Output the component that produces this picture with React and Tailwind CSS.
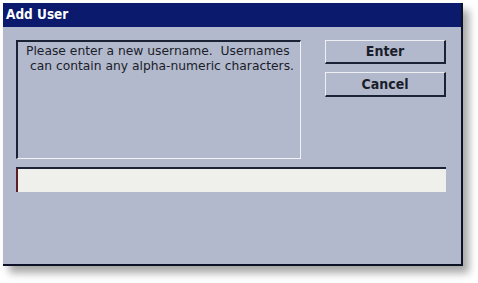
export default function App() {
  return (
    <div className="w-[478px] h-[283px] bg-white pt-[3px] pl-[3px] font-['DejaVu_Sans',sans-serif]">
      <div className="w-[460px] h-[263px] flex flex-col bg-[#b3b9cc] border-r-2 border-b-2 border-[#0d1226] shadow-[6px_7px_8px_rgba(0,0,0,0.35)]">
        <div className="h-[24px] bg-[#0b1a6c] flex items-center px-[3px]">
          <span className="text-white font-bold text-[13.5px] leading-none font-['DejaVu_Sans_Condensed','DejaVu_Sans',sans-serif]">Add User</span>
        </div>
        <div className="flex-1 px-[13px] pt-[13px]">
          <div className="flex gap-[24px]">
            <div className="w-[285px] h-[119px] border-t-2 border-l-2 border-[#1c2235] border-r border-b border-r-[#f2f3f6] border-b-[#f2f3f6] px-[8px] pt-[2px]">
              <p className="text-[12.3px] leading-[15px] text-[#1a1d2a] whitespace-nowrap">
                Please enter a new username.&nbsp; Usernames
                <br />
                &nbsp;can contain any alpha-numeric characters.
              </p>
            </div>
            <div className="flex flex-col gap-[8px]">
              <button className="w-[121px] h-[24px] border border-t-[#eef0f4] border-l-[#eef0f4] border-r-[#1c2235] border-b-[#1c2235] border-r-2 border-b-2 text-[14px] font-bold text-[#1a1d2a] font-['DejaVu_Sans_Condensed','DejaVu_Sans',sans-serif]">
                Enter
              </button>
              <button className="w-[121px] h-[25px] border border-t-[#eef0f4] border-l-[#eef0f4] border-r-[#1c2235] border-b-[#1c2235] border-r-2 border-b-2 text-[14px] font-bold text-[#1a1d2a] font-['DejaVu_Sans_Condensed','DejaVu_Sans',sans-serif]">
                Cancel
              </button>
            </div>
          </div>
          <div className="mt-[8px] w-[430px] h-[25px] bg-[#efefeb] border-t-2 border-l-2 border-[#1c2235] border-l-[#5a1f22]" />
        </div>
      </div>
    </div>
  );
}
